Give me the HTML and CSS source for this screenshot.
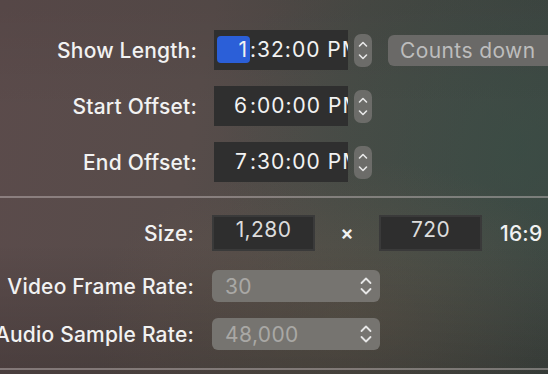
FILE: index.html
```html
<!DOCTYPE html>
<html lang="en">
<head>
    <meta charset="UTF-8">
    <meta name="viewport" content="width=device-width, initial-scale=1.0">
    <title>Project Settings</title>
    <link rel="stylesheet" href="styles.css">
</head>
<body>
    <div class="panel">
        <div class="row row-time">
            <div class="label">Show Length:</div>
            <div class="time-field"><span class="hour selected">1</span>:32:00 PM</div>
            <div class="stepper">
                <svg width="18" height="33" viewBox="0 0 18 33"><path d="M5.5 12 L9 8.5 L12.5 12 M5.5 21 L9 24.5 L12.5 21" fill="none" stroke="#e8e8e8" stroke-width="1.6" stroke-linecap="round" stroke-linejoin="round"/></svg>
            </div>
            <div class="mode-button">Counts down</div>
        </div>
        <div class="row row-time">
            <div class="label">Start Offset:</div>
            <div class="time-field"><span class="hour">6</span>:00:00 PM</div>
            <div class="stepper">
                <svg width="18" height="33" viewBox="0 0 18 33"><path d="M5.5 12 L9 8.5 L12.5 12 M5.5 21 L9 24.5 L12.5 21" fill="none" stroke="#e8e8e8" stroke-width="1.6" stroke-linecap="round" stroke-linejoin="round"/></svg>
            </div>
        </div>
        <div class="row row-time">
            <div class="label">End Offset:</div>
            <div class="time-field"><span class="hour">7</span>:30:00 PM</div>
            <div class="stepper">
                <svg width="18" height="33" viewBox="0 0 18 33"><path d="M5.5 12 L9 8.5 L12.5 12 M5.5 21 L9 24.5 L12.5 21" fill="none" stroke="#e8e8e8" stroke-width="1.6" stroke-linecap="round" stroke-linejoin="round"/></svg>
            </div>
        </div>

        <div class="divider"></div>

        <div class="row row-size">
            <div class="label label-narrow">Size:</div>
            <div class="num-field">1,280</div>
            <div class="times">×</div>
            <div class="num-field">720</div>
            <div class="ratio">16:9</div>
        </div>
        <div class="row row-popup">
            <div class="label label-narrow">Video Frame Rate:</div>
            <div class="popup">
                <span>30</span>
                <svg width="14" height="24" viewBox="0 0 14 24"><path d="M2.5 9 L7 4.5 L11.5 9 M2.5 15 L7 19.5 L11.5 15" fill="none" stroke="#e6e6e6" stroke-width="1.8" stroke-linecap="round" stroke-linejoin="round"/></svg>
            </div>
        </div>
        <div class="row row-popup2">
            <div class="label label-narrow">Audio Sample Rate:</div>
            <div class="popup">
                <span>48,000</span>
                <svg width="14" height="24" viewBox="0 0 14 24"><path d="M2.5 9 L7 4.5 L11.5 9 M2.5 15 L7 19.5 L11.5 15" fill="none" stroke="#e6e6e6" stroke-width="1.8" stroke-linecap="round" stroke-linejoin="round"/></svg>
            </div>
        </div>

        <div class="divider divider-bottom"></div>
    </div>
</body>
</html>
```

FILE: styles.css
```css
body {
    margin: 0;
    width: 548px;
    height: 374px;
    overflow: hidden;
    font-family: Inter, "Noto Sans", sans-serif;
    color: #f2f2f2;
    background:
        linear-gradient(to bottom, rgba(0, 0, 0, 0.06) 0%, transparent 30%, transparent 65%, rgba(0, 0, 0, 0.18) 100%),
        radial-gradient(ellipse 260px 160px at 350px 320px, rgba(120, 98, 80, 0.35), transparent),
        radial-gradient(ellipse 300px 260px at 520px 150px, rgba(55, 80, 70, 0.55), transparent),
        linear-gradient(100deg, #5b4b4b 0%, #574c4a 35%, #4b4a46 60%, #3e4542 100%);
}

.panel {
    display: flex;
    flex-direction: column;
    padding-top: 30px;
}

.row {
    display: flex;
    align-items: center;
}

.row > * {
    flex-shrink: 0;
}

.label {
    width: 197px;
    display: flex;
    justify-content: flex-end;
    font-size: 21px;
    font-weight: 500;
    letter-spacing: 0.2px;
    white-space: nowrap;
}

.label-narrow {
    width: 194px;
}

/* time rows */
.row-time {
    height: 40px;
    margin-bottom: 16px;
}

.time-field {
    margin-left: 17px;
    width: 134px;
    height: 40px;
    background-color: #2f2f2f;
    font-size: 21px;
    letter-spacing: 1px;
    line-height: 40px;
    white-space: nowrap;
    overflow: hidden;
    padding-left: 3px;
    box-sizing: border-box;
}

.hour {
    display: inline-block;
    width: 33px;
    height: 27px;
    line-height: 27px;
    padding-right: 2px;
    box-sizing: border-box;
    text-align: right;
    border-radius: 4px;
    vertical-align: middle;
    margin-top: -3px;
}

.hour.selected {
    background-color: #2b5fd8;
}

.stepper {
    margin-left: 6px;
    width: 18px;
    height: 33px;
    border-radius: 7px;
    background-color: #6c6c69;
    display: flex;
}

.mode-button {
    margin-left: 16px;
    height: 31px;
    width: 180px;
    border-radius: 6px;
    background-color: #6a6967;
    color: #bdbdbd;
    font-size: 21px;
    letter-spacing: 0.4px;
    line-height: 31px;
    padding-left: 12px;
    box-sizing: border-box;
    white-space: nowrap;
}

.divider {
    height: 2px;
    margin-top: -2px;
    background-color: rgba(200, 190, 190, 0.45);
}

/* size row */
.row-size {
    margin-top: 17px;
    height: 36px;
}

.num-field {
    width: 103px;
    height: 36px;
    box-sizing: border-box;
    border: 2px solid #3a3a3a;
    background-color: #2e2e2e;
    color: #dcdcdc;
    font-size: 21px;
    letter-spacing: 0.4px;
    text-align: center;
    line-height: 26px;
}

.row-size .label + .num-field {
    margin-left: 18px;
}

.times {
    width: 64px;
    text-align: center;
    font-size: 20px;
    font-weight: 600;
}

.ratio {
    margin-left: 18px;
    font-size: 21px;
    font-weight: 500;
    letter-spacing: 0.2px;
}

/* popups */
.row-popup {
    margin-top: 19px;
}

.row-popup2 {
    margin-top: 16px;
}

.popup {
    margin-left: 18px;
    width: 168px;
    height: 32px;
    box-sizing: border-box;
    border-radius: 6px;
    background-color: #767470;
    color: #a9a8a5;
    font-size: 21px;
    letter-spacing: 0.4px;
    display: flex;
    align-items: center;
    justify-content: space-between;
    padding: 0 7px 0 13px;
}

.divider-bottom {
    margin-top: 18px;
}
```
